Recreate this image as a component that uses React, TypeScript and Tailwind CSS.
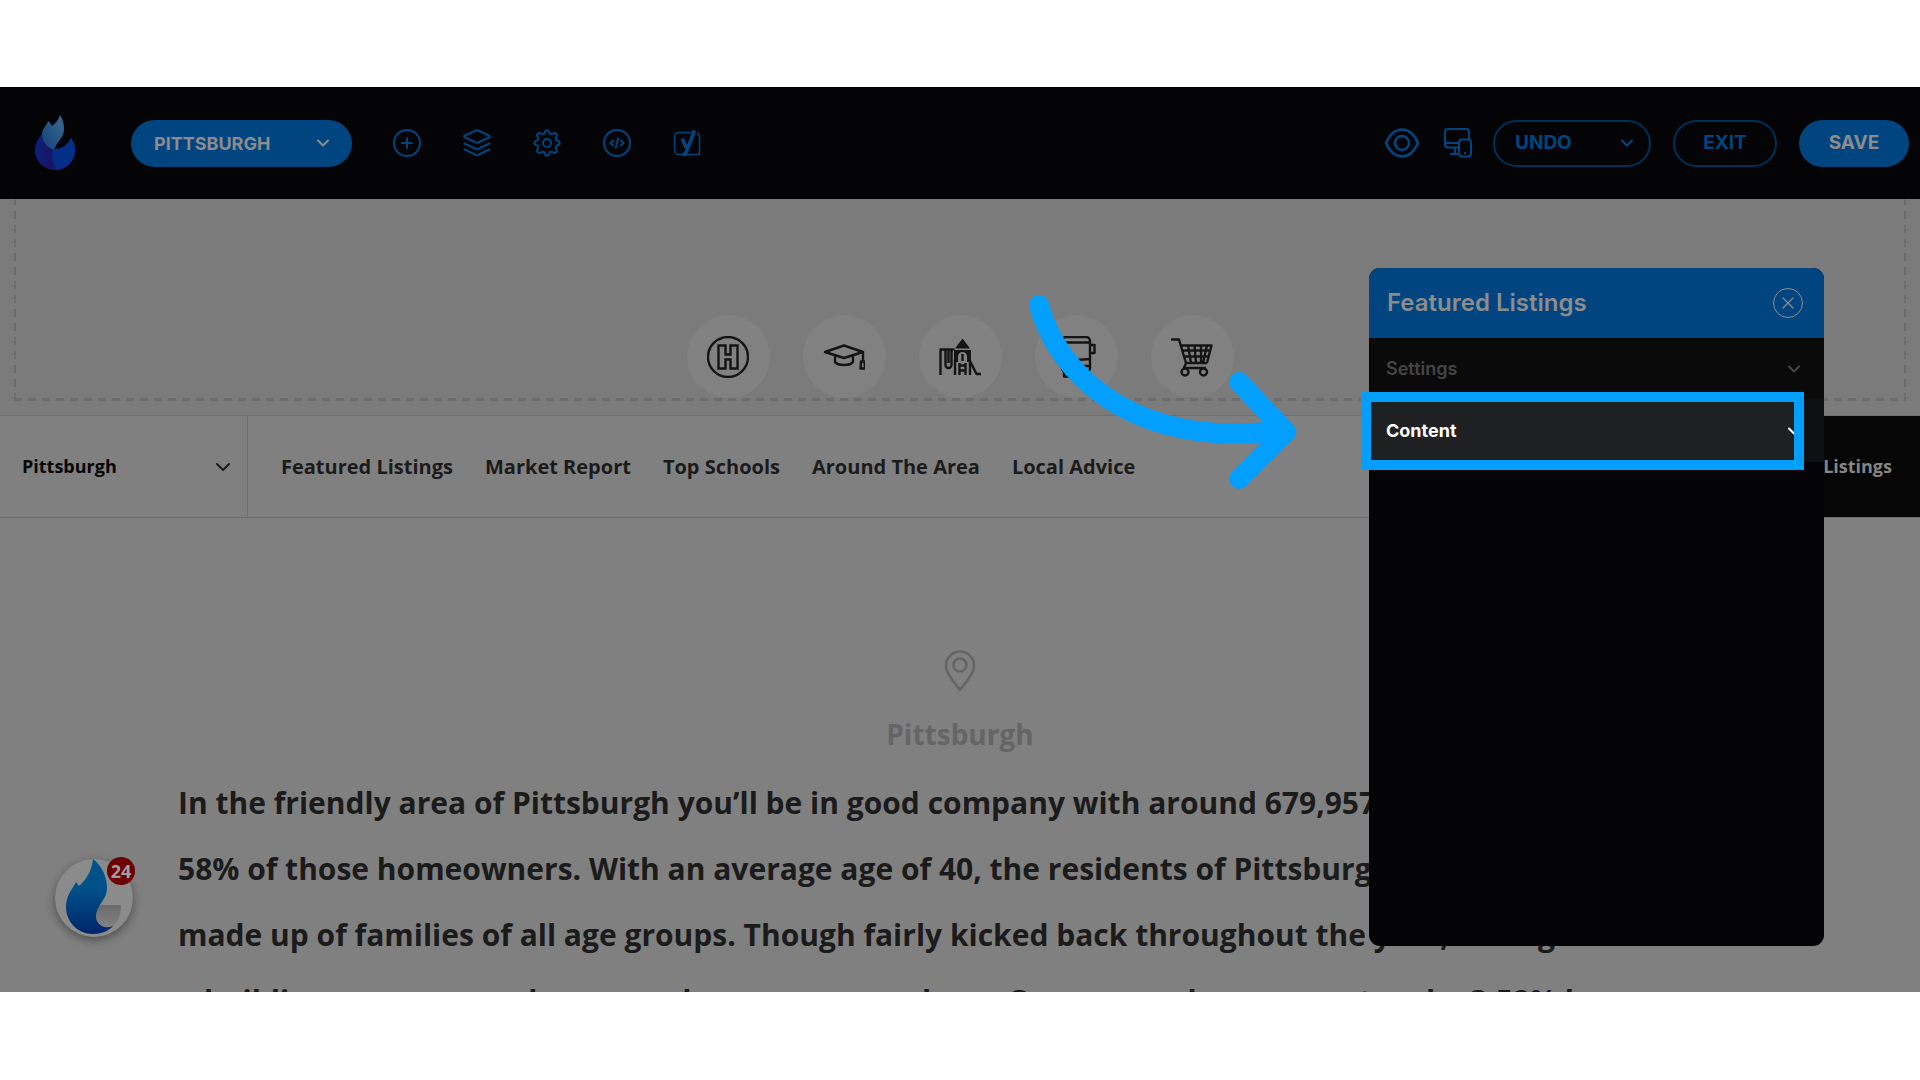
import type { ReactNode } from "react";
import { ChevronDown, X } from "lucide-react";

const navItems = [
  "Featured Listings",
  "Market Report",
  "Top Schools",
  "Around The Area",
  "Local Advice",
];

const paragraph = [
  "In the friendly area of Pittsburgh you’ll be in good company with around 679,957 residents and over",
  "58% of those homeowners. With an average age of 40, the residents of Pittsburgh are mostly",
  "made up of families of all age groups. Though fairly kicked back throughout the year, during summer",
  "a building career move has never been so easy as here. Over a year homes went up by 3.52% here",
];

function Logo() {
  return (
    <svg viewBox="0 0 42 56" className="h-14 w-[42px]" aria-label="Logo">
      <defs>
        <linearGradient id="logo-top" x1="0" y1="1" x2="1" y2="0">
          <stop offset="0" stopColor="#123f7c" />
          <stop offset="1" stopColor="#3a6c8c" />
        </linearGradient>
        <linearGradient id="logo-base" x1="0" y1="0" x2="1" y2="0">
          <stop offset="0" stopColor="#0c2080" />
          <stop offset="0.4" stopColor="#1a1464" />
          <stop offset="1" stopColor="#06408a" />
        </linearGradient>
      </defs>
      <path
        d="M8 19C3 24 1 30 1 35c0 11 9 20 20 20s20-9 20-20c0-5-2-9-4-12-4 8-9 12-16 12z"
        fill="url(#logo-base)"
      />
      <path d="M18 41c0-4 1-6 3-7 7 0 12-4 16-11 3 4 4 8 4 12 0 11-9 20-19 20 2-4-4-6-4-14z" fill="#052f87" />
      <path
        d="M20 35C12 32 8 26 8 19c0-5 5-9 6-13 2 1 3 3 4 5 4-3 7-7 8-11 3 4 4 9 4 14 0 9-7 12-10 21z"
        fill="url(#logo-top)"
      />
    </svg>
  );
}

function ToolIcon({ label, children }: { label: string; children: ReactNode }) {
  return (
    <button type="button" aria-label={label} className="text-[#004580]">
      <svg
        viewBox="0 0 28 28"
        className="size-7"
        fill="none"
        stroke="currentColor"
        strokeWidth="2"
        strokeLinecap="round"
        strokeLinejoin="round"
      >
        {children}
      </svg>
    </button>
  );
}

function Toolbar() {
  return (
    <header className="flex h-28 shrink-0 items-center bg-[#040406] pr-[11px] pl-[34px] font-['Inter',sans-serif] text-[19px] font-bold">
      <Logo />
      <button
        type="button"
        className="ml-[55px] flex h-[47px] w-[221px] items-center justify-between rounded-full bg-[#004580] pr-[19px] pl-[23px] text-[18px] text-[#8c8c8c]"
      >
        PITTSBURGH
        <ChevronDown className="size-5" strokeWidth={2.5} />
      </button>

      <div className="ml-[41px] flex gap-[42px]">
        <ToolIcon label="Add">
          <circle cx="14" cy="14" r="13" />
          <path d="M14 9v10M9 14h10" />
        </ToolIcon>
        <ToolIcon label="Layers">
          <path d="M13 1.5 2 6.5q-1.500 1 0 2l11 5q1 .4 2 0l11-5q1.500-1 0-2l-11-5q-1-.4-2 0z" />
          <path d="M1.500 14.500 13 20q1 .4 2 0l11.500-5.500M1.500 20.500 13 26q1 .4 2 0l11.500-5.500" />
        </ToolIcon>
        <ToolIcon label="Settings">
          <circle cx="14" cy="14" r="4" />
          <path d="M11.500 4.300Q12 1.300 14 1.300T16.500 4.300Q17.500 5.600 19.200 5Q21.700 3.300 23.200 4.800T23 8.800Q22.400 10.500 23.700 11.500Q26.700 12 26.700 14T23.700 16.500Q22.400 17.500 23 19.200Q24.700 21.700 23.200 23.200T19.200 23Q17.500 22.400 16.500 23.700Q16 26.700 14 26.700T11.500 23.700Q10.500 22.400 8.800 23Q6.300 24.700 4.800 23.200T5 19.200Q5.600 17.500 4.300 16.500Q1.300 16 1.300 14T4.300 11.500Q5.600 10.500 5 8.800Q3.300 6.300 4.800 4.800T8.800 5Q10.500 5.600 11.500 4.300z" />
        </ToolIcon>
        <ToolIcon label="Code">
          <circle cx="14" cy="14" r="13" />
          <path d="M10 11.500 7.500 14l2.500 2.500M18 11.500l2.500 2.500-2.500 2.500M15.200 9.500l-2.400 9" />
        </ToolIcon>
        <ToolIcon label="SEO">
          <path d="M18 3.500H5.500a4 4 0 0 0-4 4v14a4 4 0 0 0 4 4h21V7.500a4 4 0 0 0-2-3.500" strokeWidth="1.500" />
          <path d="M9 9.500 13.500 19M21.500 1.500 14.500 20q-1.500 5.500-5 5.800" strokeWidth="3.600" strokeLinecap="butt" />
        </ToolIcon>
      </div>

      <div className="ml-auto flex items-center text-[#004580]">
        <button type="button" aria-label="Preview">
          <svg viewBox="0 0 36 30" className="h-[30px] w-9" fill="none" stroke="currentColor" strokeWidth="2.600">
            <path d="M2 15C6 6 12 1.500 18 1.500S30 6 34 15C30 24 24 28.500 18 28.500S6 24 2 15z" strokeLinejoin="round" />
            <circle cx="18" cy="15" r="7" />
          </svg>
        </button>
        <button type="button" aria-label="Devices" className="ml-6">
          <svg viewBox="0 0 28 30" className="h-[30px] w-7" fill="none" stroke="currentColor" strokeWidth="2">
            <path d="M14 19.500H4a3 3 0 0 1-3-3V4a3 3 0 0 1 3-3h18a3 3 0 0 1 3 3v7M1 15h13M11 20v5.500M6 26h8" />
            <rect x="15" y="11.500" width="12" height="17" rx="3" />
            <path d="M21 24v2" />
          </svg>
        </button>
        <button
          type="button"
          className="ml-[21px] flex h-[47px] w-[158px] items-center justify-between rounded-full border-2 border-[#00305a] pr-3 pl-5"
        >
          UNDO
          <ChevronDown className="size-5" strokeWidth={2.5} />
        </button>
        <button type="button" className="ml-[22px] h-[47px] w-[104px] rounded-full border-2 border-[#00305a]">
          EXIT
        </button>
        <button type="button" className="ml-[22px] h-[47px] w-[110px] rounded-full bg-[#004580] text-[#8c8c8c]">
          SAVE
        </button>
      </div>
    </header>
  );
}

function CategoryCircle({ label, children }: { label: string; children: ReactNode }) {
  return (
    <a href="#" aria-label={label} className="flex size-[83px] items-center justify-center rounded-full bg-[#818181]">
      <svg
        viewBox="0 0 42 42"
        className="size-[42px] text-[#141414]"
        fill="none"
        stroke="currentColor"
        strokeWidth="2.400"
        strokeLinejoin="round"
      >
        {children}
      </svg>
    </a>
  );
}

function Categories() {
  return (
    <section className="shrink-0 bg-[#7b7b7b] px-3.5 pb-3.5">
      <div className="flex h-[202px] items-end justify-center gap-[33px] bg-[repeating-linear-gradient(90deg,#6c6c6c_0_8px,transparent_8px_14px),repeating-linear-gradient(0deg,#6c6c6c_0_8px,transparent_8px_14px),repeating-linear-gradient(0deg,#6c6c6c_0_8px,transparent_8px_14px)] bg-[length:100%_3px,2px_100%,2px_100%] bg-[position:bottom,left,right] bg-no-repeat pb-[3px]">
        <CategoryCircle label="Hospitals">
          <circle cx="21" cy="21" r="20" />
          <path d="M11.500 9.500h7v9h5v-9h7v23h-7v-9h-5v9h-7z" strokeLinejoin="miter" />
        </CategoryCircle>
        <CategoryCircle label="Schools">
          <path d="M2 16 21 9.500 40 16l-19 6zM12 19.500V26q2 3 9 3t9-3v-6.500M40 16v9" />
          <path d="M38 25.500h3.500l.5 7h-4.500z" />
        </CategoryCircle>
        <CategoryCircle label="Playgrounds">
          <path d="M23.500 2.500 31 12.500H16z" fill="currentColor" stroke="none" />
          <path
            d="M15 14h17v12h-4v-5.500a4.500 4.500 0 0 0-9 0V26h-4z"
            fill="currentColor"
            stroke="none"
          />
          <path d="M1.500 39V13.500h14M6.500 14v15a3 3 0 0 0 6 0V14M9.500 14v13M16 39V24M20.500 39V27M26.500 39V27M31 39V24M20.500 29.500h6M20.500 34.500h6M23.500 18v7M31.500 26l6 12H42" />
        </CategoryCircle>
        <CategoryCircle label="Transit">
          <rect x="7" y="1" width="28" height="35" rx="4" />
          <path d="M7 6.500h28M35 9h4.500v8H35M7 9H2.500v8H7M7 25l28-2M28 30h7M9 36v4.500h5V36M28 36v4.500h5V36" />
        </CategoryCircle>
        <CategoryCircle label="Shopping">
          <path d="M0 3.500h8L15 27h21M9.500 9.500h31L36 27M11 14.500h28M13 20.500h25M17 9.500 20 27M23.500 9.500 25 27M30 9.500V27M36 9.500 32 27M15 27l-2 5h22" />
          <circle cx="14" cy="36" r="3.500" />
          <circle cx="32.500" cy="36" r="3.500" />
        </CategoryCircle>
      </div>
    </section>
  );
}

function PageNav() {
  return (
    <nav className="flex h-[103px] shrink-0 items-stretch border-y border-[#6e6e6e] text-[20px] font-bold text-[#1b1b1b]">
      <button
        type="button"
        className="flex w-[248px] items-center justify-between border-r border-[#6e6e6e] pr-3 pl-[22px] text-[18px] text-[#050505]"
      >
        Pittsburgh
        <ChevronDown className="size-6 text-[#1b1b1b]" />
      </button>
      <div className="flex flex-1 items-center gap-[32px] pl-[33px]">
        {navItems.map((item) => (
          <a key={item} href="#">
            {item}
          </a>
        ))}
      </div>
      <a href="#" className="flex w-[320px] items-center justify-end bg-[#060606] pr-7 text-[18px] text-[#858585]">
        View Featured Listings
      </a>
    </nav>
  );
}

function Intro() {
  return (
    <main className="flex flex-col items-center px-20 pt-[132px]">
      <svg viewBox="0 0 32 42" className="h-[42px] w-8" fill="none" stroke="#656565" strokeWidth="2.600">
        <path d="M16 40C9 31 2 23 2 15.500a14 14 0 0 1 28 0C30 23 23 31 16 40z" strokeLinejoin="round" />
        <circle cx="16" cy="15" r="6.500" />
      </svg>
      <h1 className="mt-[22px] text-[28px] leading-10 font-bold text-[#656565]">Pittsburgh</h1>
      <p className="mt-4 w-full max-w-[1564px] text-[30px] leading-[66px] font-bold whitespace-nowrap text-[#1b1b1b]">
        {paragraph.map((line) => (
          <span key={line} className="block">
            {line}
          </span>
        ))}
      </p>
    </main>
  );
}

function WidgetPanel() {
  return (
    <aside className="absolute top-[181px] right-24 flex h-[678px] w-[455px] flex-col rounded-[11px] bg-[#040406] font-['Inter',sans-serif] text-[18px] font-semibold">
      <div className="flex h-[70px] items-center justify-between rounded-t-[11px] bg-[#004580] pr-[21px] pl-[18px] text-[#8c8c8c]">
        <h2 className="text-[24px]">Featured Listings</h2>
        <button
          type="button"
          aria-label="Close"
          className="flex size-[30px] items-center justify-center rounded-full border border-[#8c8c8c]"
        >
          <X className="size-5" strokeWidth={1.5} />
        </button>
      </div>
      <button type="button" className="flex h-[61px] items-center justify-between bg-[#0a0a0a] pr-5 pl-[17px] text-[#444446]">
        Settings
        <ChevronDown className="size-5" strokeWidth={2.5} />
      </button>
      <button
        type="button"
        className="relative flex h-[63px] items-center justify-between bg-[#0f1012] pr-5 pl-[17px] font-bold text-white"
      >
        <span className="absolute -top-[7px] right-5 -left-2 h-[78px] bg-[#1f2022]" />
        <span className="relative">Content</span>
        <ChevronDown className="relative size-5" strokeWidth={2.5} />
        <span className="absolute -top-[7px] right-5 -left-2 h-[78px] border-10 border-[#039fff]" />
      </button>
    </aside>
  );
}

function Arrow() {
  return (
    <svg
      viewBox="0 0 270 200"
      className="pointer-events-none absolute top-[203px] right-[621px] h-[200px] w-[270px]"
      fill="none"
      stroke="#039fff"
      strokeWidth="20"
      strokeLinecap="round"
      strokeLinejoin="round"
    >
      <path d="M10 15C27 80 98 155 238 142L257 142" />
      <path d="M210 92l47 50-47 47" />
    </svg>
  );
}

function ChatBubble() {
  return (
    <button
      type="button"
      aria-label="Open messages"
      className="absolute bottom-[55px] left-[55px] size-[78px] rounded-full bg-[#8b8b8b] shadow-[0_3px_10px_rgba(0,0,0,0.4)]"
    >
      <svg viewBox="0 0 78 78" className="size-full">
        <defs>
          <linearGradient id="chat-flame" x1="0" y1="0" x2="0" y2="1">
            <stop offset="0.4" stopColor="#00508a" />
            <stop offset="1" stopColor="#00256a" />
          </linearGradient>
          <linearGradient id="chat-bubble" x1="0" y1="0" x2="0" y2="1">
            <stop offset="0" stopColor="#6a6a6a" />
            <stop offset="1" stopColor="#858585" />
          </linearGradient>
        </defs>
        <path d="M40 46h26c0 10-3 18-10 24-12 0-18-14-16-24z" fill="url(#chat-bubble)" />
        <path
          d="M38 0c9 7 14 18 14 29 0 12-11 17-11 28 0 8 8 14 17 10-4 5-12 8-20 8C22 75 11 62 11 48c0-12 6-17 10-25l3 4c8-7 13-16 14-27z"
          fill="url(#chat-flame)"
        />
      </svg>
      <span className="absolute -top-0.5 -right-0.5 flex size-7 items-center justify-center rounded-full bg-[#6d0000] text-[18px] font-bold text-[#a0a0a0]">
        24
      </span>
    </button>
  );
}

export default function App() {
  return (
    <div className="h-screen bg-white pt-[87px] pb-[88px] font-['Open_Sans',sans-serif]">
      <div className="relative flex h-full flex-col overflow-hidden bg-[#808080]">
        <Toolbar />
        <Categories />
        <PageNav />
        <Intro />
        <WidgetPanel />
        <Arrow />
        <ChatBubble />
      </div>
    </div>
  );
}
